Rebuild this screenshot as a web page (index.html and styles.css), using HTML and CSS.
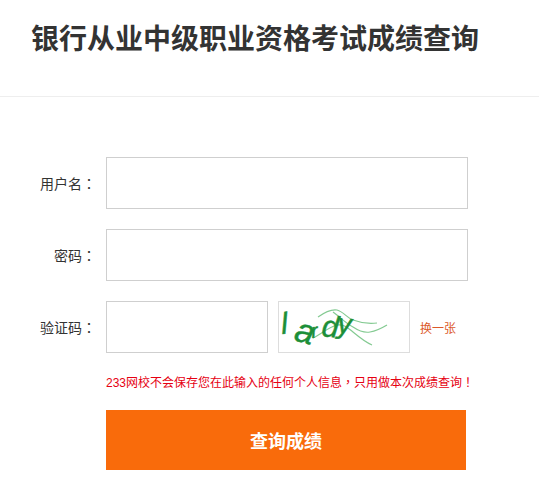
FILE: index.html
```html
<!DOCTYPE html>
<html lang="zh-CN">
<head>
    <meta charset="UTF-8">
    <title>银行从业中级职业资格考试成绩查询</title>
    <link rel="stylesheet" href="styles.css">
</head>
<body>
    <div class="header">
        <h1>银行从业中级职业资格考试成绩查询</h1>
    </div>

    <form class="query-form">
        <div class="form-row">
            <label class="form-label">用户名<span class="punct" lang="zh-TW">：</span></label>
            <input class="form-input" type="text">
        </div>
        <div class="form-row">
            <label class="form-label">密码<span class="punct" lang="zh-TW">：</span></label>
            <input class="form-input" type="password">
        </div>
        <div class="form-row">
            <label class="form-label">验证码<span class="punct" lang="zh-TW">：</span></label>
            <input class="form-input code-input" type="text">
            <div class="code-image">
                <svg width="130" height="50" viewBox="0 0 130 50">
                    <g fill="none" stroke="#84ca92" stroke-width="1.2">
                        <path d="M39 15 C46 10 52 7 58 8 C65 10 68 16 74 18 C82 21 90 22 98 21"/>
                        <path d="M54 10 C60 14 66 21 74 25 C80 29 86 31 91 30 C97 29 103 26 108 23"/>
                        <path d="M34 36 C42 32 50 25 58 23 C65 22 69 26 74 30 C80 35 86 40 93 43"/>
                    </g>
                    <g class="code-text">
                        <text class="code-l" x="3" y="32" transform="rotate(-6 3 32)">l</text>
                        <text class="code-a" x="14" y="38" transform="rotate(15 14 38)">a</text>
                        <text class="code-r" x="33" y="36" transform="rotate(-8 33 36)">r</text>
                        <text class="code-d" x="42" y="34" transform="rotate(6 42 34)">d</text>
                        <text class="code-y" x="58" y="31" transform="rotate(4 58 31)">y</text>
                    </g>
                </svg>
            </div>
            <a class="code-change" href="#">换一张</a>
        </div>
        <p class="notice">233网校不会保存您在此输入的任何个人信息<span class="punct" lang="zh-TW">，</span>只用做本次成绩查询<span class="punct" lang="zh-TW">！</span></p>
        <button class="submit-button" type="button">查询成绩</button>
    </form>
</body>
</html>
```

FILE: styles.css
```css
* {
    box-sizing: border-box;
}
body {
    margin: 0;
    background-color: #ffffff;
    font-family: "Liberation Sans", "Noto Sans CJK SC", sans-serif;
    color: #333333;
    overflow: hidden;
}
.header {
    height: 97px;
    padding: 22px 31px 0;
    border-bottom: 1px solid #eeeeee;
}
.header h1 {
    margin: 0;
    font-size: 28px;
    line-height: 36px;
    font-weight: bold;
    white-space: nowrap;
}
.query-form {
    padding: 60px 0 0 33px;
}
.form-row {
    display: flex;
    align-items: center;
    height: 52px;
    margin-bottom: 20px;
}
.form-label {
    width: 73px;
    padding-right: 10px;
    font-size: 14px;
    text-align: right;
    white-space: nowrap;
}
.punct {
    font-family: "Noto Sans CJK TC", sans-serif;
}
.form-input {
    width: 362px;
    height: 52px;
    border: 1px solid #cfcfcf;
    background-color: #ffffff;
}
.code-input {
    width: 162px;
}
.code-image {
    width: 132px;
    height: 52px;
    margin-left: 10px;
    border: 1px solid #dddddd;
}
.code-image svg {
    display: block;
}
.code-text text {
    font-family: "Liberation Sans", sans-serif;
    font-style: italic;
    fill: #1c8f38;
    stroke: #1c8f38;
    stroke-width: 0.5;
}
.code-l {
    font-size: 30px;
}
.code-a {
    font-size: 34px;
}
.code-r {
    font-size: 20px;
}
.code-d {
    font-size: 30px;
}
.code-y {
    font-size: 28px;
}
.code-change {
    margin-left: 10px;
    font-size: 12px;
    color: #dc5a2a;
    text-decoration: none;
}
.notice {
    margin: 0 0 0 73px;
    font-size: 12px;
    line-height: 18px;
    color: #e60012;
    white-space: nowrap;
}
.submit-button {
    display: block;
    width: 360px;
    height: 60px;
    margin: 18px 0 0 73px;
    border: none;
    background-color: #f96b0b;
    color: #ffffff;
    font-family: inherit;
    font-size: 18px;
    font-weight: bold;
}
```
